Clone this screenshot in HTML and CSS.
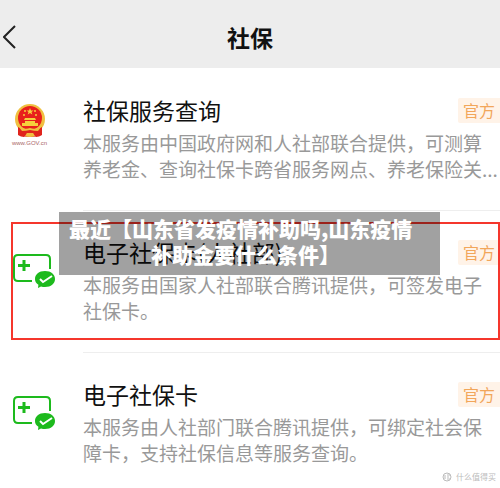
FILE: index.html
```html
<!DOCTYPE html>
<html lang="zh-CN">
  <head>
    <meta charset="utf-8">
    <title>社保</title>
    <link rel="stylesheet" href="styles.css">
  </head>
  <body>
    <header class="topbar">
      <button class="back" aria-label="返回">
        <svg width="14" height="24" viewBox="0 0 14 24"><path d="M12 1 L1 12 L12 23"/></svg>
      </button>
      <h1>社保</h1>
    </header>

    <main class="list">
      <section class="item">
        <div class="icon">
          <svg width="40" height="46" viewBox="0 0 40 46">
            <path d="M8 24 L32 24 L31 32 Q26 34 20 34 Q14 34 9 32Z" fill="#d8201c"/>
            <circle cx="20" cy="16" r="15" fill="#f0c040"/>
            <circle cx="20" cy="15" r="12" fill="#e8201c"/>
            <path d="M20 5l1 2.400h2.500l-2 1.600.8 2.500-2.300-1.500-2.300 1.500.8-2.500-2-1.600H19z" fill="#f6cf3c"/>
            <g fill="#f6cf3c">
              <circle cx="14" cy="12" r="1"/><circle cx="26" cy="12" r="1"/>
              <circle cx="15" cy="8" r="1"/><circle cx="25" cy="8" r="1"/>
              <path d="M15 15h10l1 2H14zM15 18h10v2h3v3H12v-3h3z"/>
            </g>
            <path d="M8 24q6 4 12 1q6 3 12-1v8q-3 2-6 2l-3-4h-6l-3 4q-3 0-6-2z" fill="#e0241c"/>
            <path d="M9 24q6 3 11 1q5 2 11-1l-3 4q-4 0-8-1q-4 1-8 1zM15 33l2-3h6l2 3q-5 2-10 0z" fill="#f0c040"/>
          </svg>
          <span class="gov">www.GOV.cn</span>
        </div>
        <div class="info">
          <div class="row">
            <h2>社保服务查询</h2>
            <span class="tag">官方</span>
          </div>
          <p>本服务由中国政府网和人社部联合提供，可测算养老金、查询社保卡跨省服务网点、养老保险关...</p>
        </div>
      </section>

      <section class="item marked">
        <div class="icon card">
          <svg width="44" height="36" viewBox="0 0 44 36">
            <path d="M19 27 H5 Q1 27 1 23 V5 Q1 1 5 1 H33 Q37 1 37 5 V15" fill="none" stroke="#1dba1d" stroke-width="2"/>
            <path d="M11 6v11M5 11.500h12" stroke="#1dba1d" stroke-width="3"/>
            <path d="M32 17c6 0 10 3.500 10 8s-4 8-10 8c-1.500 0-2.500-.2-4-.6L25 34l.4-3.300C23 29 22 27.500 22 25c0-4.500 4-8 10-8z" fill="#1dba1d"/>
            <path d="M27 25l3 3 9-6" fill="none" stroke="#fff" stroke-width="2"/>
          </svg>
        </div>
        <div class="info">
          <div class="row">
            <h2>电子社保卡(人社部)</h2>
            <span class="tag">官方</span>
          </div>
          <p>本服务由国家人社部联合腾讯提供，可签发电子社保卡。</p>
        </div>
        <div class="caption">最近【山东省发疫情补助吗,山东疫情&nbsp;&nbsp;<br>补助金要什么条件】</div>
      </section>

      <section class="item">
        <div class="icon card">
          <svg width="44" height="36" viewBox="0 0 44 36">
            <path d="M19 27 H5 Q1 27 1 23 V5 Q1 1 5 1 H33 Q37 1 37 5 V15" fill="none" stroke="#1dba1d" stroke-width="2"/>
            <path d="M11 6v11M5 11.500h12" stroke="#1dba1d" stroke-width="3"/>
            <path d="M32 17c6 0 10 3.500 10 8s-4 8-10 8c-1.500 0-2.500-.2-4-.6L25 34l.4-3.300C23 29 22 27.500 22 25c0-4.500 4-8 10-8z" fill="#1dba1d"/>
            <path d="M27 25l3 3 9-6" fill="none" stroke="#fff" stroke-width="2"/>
          </svg>
        </div>
        <div class="info">
          <div class="row">
            <h2>电子社保卡</h2>
            <span class="tag">官方</span>
          </div>
          <p>本服务由人社部门联合腾讯提供，可绑定社会保障卡，支持社保信息等服务查询。</p>
        </div>
      </section>
    </main>

    <footer class="credit">
      <svg width="10" height="10" viewBox="0 0 10 10"><circle cx="5" cy="5" r="4"/><path d="M3 3v4M5 3h3M5 5h2M5 7h3"/></svg>
      <span>什么值得买</span>
    </footer>
  </body>
</html>
```
FILE: styles.css
```css
* {
  box-sizing: border-box;
}
body {
  margin: 0;
  background: #fff;
  color: #111;
  font-family: "Noto Sans CJK SC", sans-serif;
}
h1, h2, p {
  margin: 0;
}
.topbar {
  display: grid;
  grid-template-columns: 40px 1fr 40px;
  align-items: center;
  height: 68px;
  padding-top: 5px;
  background: #ededed;
}
.topbar h1 {
  font-size: 23px;
  line-height: 30px;
  text-align: center;
}
.back {
  display: flex;
  padding: 0 0 0 3px;
  border: none;
  background: none;
  cursor: pointer;
}
.back path {
  fill: none;
  stroke: #222;
  stroke-width: 2;
}
.item {
  position: relative;
  display: flex;
  padding-bottom: 28px;
}
.icon {
  display: flex;
  flex-direction: column;
  align-items: center;
  width: 59px;
  margin-right: 24px;
  padding-top: 35px;
}
.icon.card {
  align-items: flex-start;
  padding-top: 44px;
  padding-left: 13px;
}
.gov {
  margin-top: -10px;
  font-family: "Liberation Sans", sans-serif;
  font-size: 6px;
  line-height: 8px;
  color: #a66;
}
.info {
  flex: 1;
  padding-top: 26px;
  border-top: 1px solid #eee;
}
.item:first-child .info {
  border-color: transparent;
}
.row {
  display: flex;
  justify-content: space-between;
  align-items: center;
  height: 30px;
  margin-bottom: 5px;
}
.row h2 {
  font-size: 23px;
  font-weight: 400;
  line-height: 30px;
}
.tag {
  padding: 0 5px;
  border-radius: 2px 0 0 2px;
  background: #fff3e8;
  color: #f2a65a;
  font-size: 16px;
  line-height: 25px;
}
.info p {
  font-size: 19px;
  font-weight: 400;
  line-height: 26px;
  color: #999;
}
/* red frame round the highlighted service */
.marked::before {
  content: "";
  position: absolute;
  top: 12px;
  right: 0;
  bottom: 12px;
  left: 11px;
  border: 2px solid #f5362c;
}
.caption {
  position: absolute;
  top: 2px;
  left: 59px;
  right: 60px;
  padding: 3px 8px 8px 0;
  background: rgba(0, 0, 0, 0.37);
  color: #fff;
  font-size: 21px;
  font-weight: 900;
  line-height: 26px;
  text-align: center;
}
.item:last-child {
  padding-bottom: 0;
}
.credit {
  display: flex;
  justify-content: flex-end;
  align-items: center;
  gap: 4px;
  height: 22px;
  padding-right: 4px;
  color: #bbb;
  font-size: 8px;
  line-height: 12px;
}
.credit svg {
  fill: none;
  stroke: #bbb;
}
```
